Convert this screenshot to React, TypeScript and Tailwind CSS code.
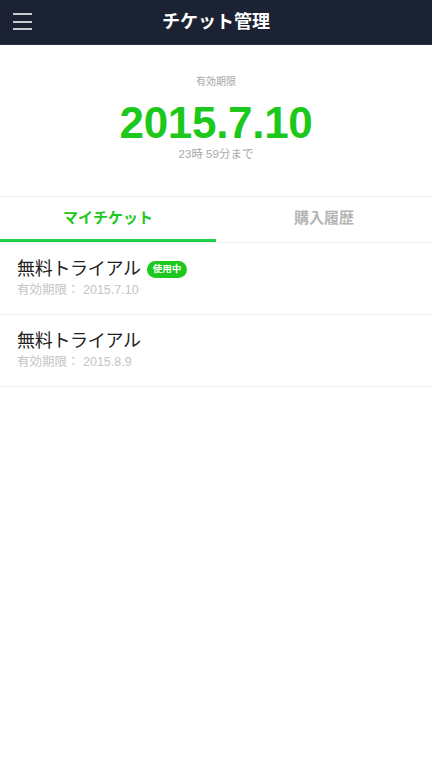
import React from "react";

const font = { fontFamily: '"Liberation Sans", "Noto Sans CJK JP", sans-serif' };

export default function App() {
  return (
    <div className="w-[432px] h-[768px] bg-white flex flex-col" style={font}>
      <div className="h-[45px] bg-[#1b2233] border-b border-[#2c3444] flex items-center relative">
        <div className="absolute left-[13px] top-[13px] flex flex-col gap-[5.5px]">
          <div className="w-[19px] h-[2px] bg-[#c8ccd2]" />
          <div className="w-[19px] h-[2px] bg-[#c8ccd2]" />
          <div className="w-[19px] h-[2px] bg-[#c8ccd2]" />
        </div>
        <div className="flex-1 text-center text-white font-bold text-[18px] leading-none">チケット管理</div>
      </div>
      <div className="flex flex-col items-center pt-[32px] h-[152px] border-b border-[#f0f0f0]">
        <div className="text-[10px] text-[#a8a8a8] leading-none">有効期限</div>
        <div className="text-[44px] font-bold text-[#1dc81d] leading-none mt-[14px] tracking-[-0.3px]">2015.7.10</div>
        <div className="text-[11.5px] text-[#a8a8a8] leading-none mt-[4px]">23時 59分まで</div>
      </div>
      <div className="flex h-[46px] border-b border-[#f0f0f0]">
        <div className="w-1/2 flex flex-col">
          <div className="flex-1 flex items-center justify-center text-[15px] font-bold text-[#1dc81d] pt-[1px]">マイチケット</div>
          <div className="h-[3px] bg-[#21d04a]" />
        </div>
        <div className="w-1/2 flex items-center justify-center text-[15px] font-bold text-[#b4b4b4] pb-[2px]">購入履歴</div>
      </div>
      <div className="flex flex-col">
        <div className="h-[72px] border-b border-[#f0f0f0] pl-[17px] pt-[17px]">
          <div className="flex items-center gap-[6px]">
            <span className="text-[18px] text-[#222] leading-none tracking-[-0.3px]">無料トライアル</span>
            <span className="h-[17px] px-[6px] rounded-full bg-[#1dc81d] text-white text-[9.5px] font-bold flex items-center leading-none">使用中</span>
          </div>
          <div className="text-[12.5px] text-[#c4c4c4] leading-none mt-[6px]">有効期限： 2015.7.10</div>
        </div>
        <div className="h-[72px] border-b border-[#f0f0f0] pl-[17px] pt-[17px]">
          <div className="text-[18px] text-[#222] leading-none tracking-[-0.3px]">無料トライアル</div>
          <div className="text-[12.5px] text-[#c4c4c4] leading-none mt-[6px]">有効期限： 2015.8.9</div>
        </div>
      </div>
    </div>
  );
}
